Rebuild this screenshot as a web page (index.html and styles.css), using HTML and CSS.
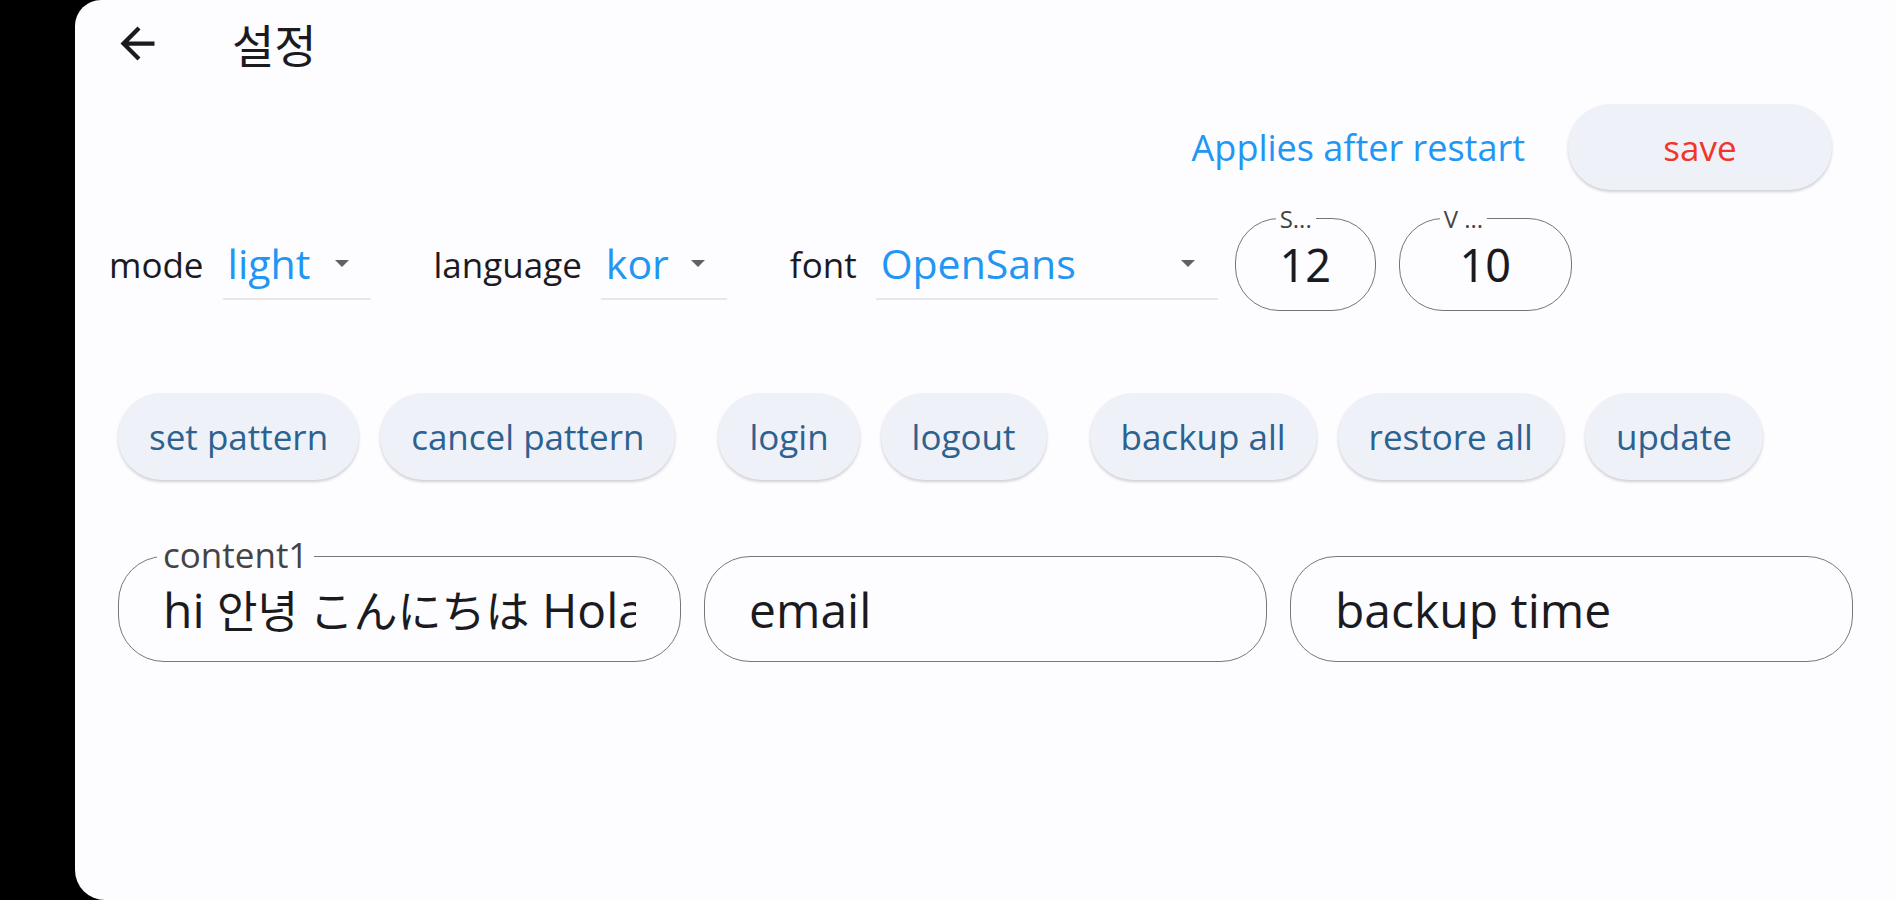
FILE: index.html
```html
<!DOCTYPE html>
<html lang="ko">
<head>
<meta charset="utf-8">
<title>설정</title>
<link rel="stylesheet" href="styles.css">
</head>
<body>
<div class="screen">
  <header class="appbar">
    <span class="back">
      <svg viewBox="0 0 24 24" width="51" height="51"><path d="M20 11H7.83l5.59-5.59L12 4l-8 8 8 8 1.41-1.41L7.83 13H20v-2z" fill="#1b1b1f"/></svg>
    </span>
    <h1 class="title">설정</h1>
  </header>

  <div class="save-row">
    <span class="notice">Applies after restart</span>
    <button class="pill save">save</button>
  </div>

  <div class="options-row">
    <span class="opt-label">mode</span>
    <span class="dropdown dd-mode"><span class="dd-value">light</span><span class="caret"></span></span>
    <span class="opt-label spaced">language</span>
    <span class="dropdown dd-lang"><span class="dd-value">kor</span><span class="caret"></span></span>
    <span class="opt-label spaced">font</span>
    <span class="dropdown dd-font"><span class="dd-value">OpenSans</span><span class="caret"></span></span>
    <span class="num-box nb-first"><span class="nb-label">S...</span><span class="nb-value">12</span></span>
    <span class="num-box nb-second"><span class="nb-label">V ...</span><span class="nb-value">10</span></span>
  </div>

  <div class="actions-row">
    <div class="group">
      <button class="pill action">set pattern</button>
      <button class="pill action">cancel pattern</button>
    </div>
    <div class="group">
      <button class="pill action">login</button>
      <button class="pill action">logout</button>
    </div>
    <div class="group">
      <button class="pill action">backup all</button>
      <button class="pill action">restore all</button>
      <button class="pill action">update</button>
    </div>
  </div>

  <div class="fields-row">
    <div class="field"><span class="field-label">content1</span><span class="field-text">hi <span class="cjk">안녕 こんにちは</span> Hola</span></div>
    <div class="field"><span class="field-text">email</span></div>
    <div class="field"><span class="field-text">backup time</span></div>
  </div>
</div>
</body>
</html>
```

FILE: styles.css
```css
* { box-sizing: border-box; }
html, body { margin: 0; padding: 0; }
body {
  background: #000;
  font-family: "Open Sans", "Noto Sans CJK KR", "Noto Sans CJK JP", sans-serif;
  color: #1b1b1f;
}
.screen {
  margin-left: 75px;
  height: 900px;
  background: #fdfcff;
  border-radius: 26px 0 0 30px;
  overflow: hidden;
}
.appbar {
  height: 86px;
  display: flex;
  align-items: center;
  padding-left: 37px;
}
.back { display: flex; width: 51px; height: 51px; }
.title {
  margin: 0 0 0 69px;
  font-family: "Noto Sans CJK KR", sans-serif;
  font-weight: 400;
  font-size: 46px;
  line-height: 1;
  color: #1b1b1f;
}
.save-row {
  margin-top: 18px;
  height: 86px;
  display: flex;
  justify-content: flex-end;
  align-items: center;
  padding-right: 64px;
  gap: 43px;
}
.notice {
  color: #2196f3;
  font-size: 36px;
  font-weight: 500;
}
.pill {
  border: none;
  font-family: "Open Sans", sans-serif;
  font-weight: 500;
  font-size: 35px;
  background: #eef1f7;
  border-radius: 44px;
  box-shadow: 0 2px 3px rgba(0,0,0,0.18);
  padding: 0;
}
.save {
  width: 264px;
  height: 86px;
  color: #f0362a;
  font-size: 35px;
}
.options-row {
  margin-top: 28px;
  height: 93px;
  display: flex;
  align-items: center;
  padding-left: 34px;
}
.opt-label {
  font-size: 35px;
  color: #1b1b1f;
  margin-right: 19px;
}
.opt-label.spaced { margin-left: 63px; }
.dropdown {
  display: flex;
  align-items: center;
  height: 62px;
  margin-top: 8px;
  padding-left: 5px;
  border-bottom: 2px solid #e8e8ec;
  color: #2196f3;
  font-size: 41px;
}
.dd-value { line-height: 1; margin-top: -8px; }
.caret {
  margin-left: auto;
  width: 0; height: 0;
  border-left: 7px solid transparent;
  border-right: 7px solid transparent;
  border-top: 7px solid #616161;
  margin-top: -8px;
}
.dd-mode { width: 148px; padding-right: 22px; }
.dd-lang { width: 126px; padding-right: 22px; }
.dd-font { width: 342px; padding-right: 23px; }
.num-box {
  position: relative;
  display: flex;
  align-items: center;
  justify-content: center;
  height: 93px;
  border: 1.5px solid #757575;
  border-radius: 44px;
  margin-left: 17px;
}
.nb-first { width: 141px; }
.nb-second { width: 173px; margin-left: 23px; }
.nb-label {
  position: absolute;
  top: -13px;
  left: 40px;
  padding: 0 4px;
  background: #fdfcff;
  font-size: 24px;
  line-height: 26px;
  color: #444;
}
.nb-value {
  font-family: "Noto Sans", sans-serif;
  font-size: 45px;
  color: #1b1b1f;
  line-height: 1;
}
.actions-row {
  margin-top: 82px;
  display: flex;
  padding-left: 43px;
  gap: 43px;
}
.group { display: flex; gap: 21px; }
.action {
  height: 87px;
  padding: 0 31px;
  color: #2c6290;
}
.fields-row {
  margin-top: 76px;
  display: flex;
  padding-left: 43px;
  gap: 23px;
}
.field {
  position: relative;
  width: 563px;
  height: 106px;
  border: 1.5px solid #787878;
  border-radius: 46px;
  display: flex;
  align-items: center;
  padding: 0 44px 0 44px;
}
.field-text {
  font-size: 48px;
  color: #1b1b1f;
  white-space: nowrap;
  overflow: hidden;
  display: block;
  width: 100%;
}
.cjk { font-size: 44px; }
.field-label {
  position: absolute;
  top: -22px;
  left: 38px;
  padding: 0 6px;
  background: #fdfcff;
  font-size: 35px;
  line-height: 40px;
  color: #444;
}
```
